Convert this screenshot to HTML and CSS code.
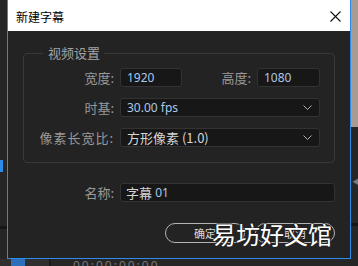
FILE: index.html
```html
<!DOCTYPE html>
<html lang="zh-CN">
<head>
  <meta charset="UTF-8">
  <meta name="viewport" content="width=device-width, initial-scale=1.0">
  <title>新建字幕</title>
  <link rel="stylesheet" href="styles.css">
</head>
<body>

  <div class="screen">
    <div class="side side-left">
      <div class="left-tab"></div>
      <div class="side-line"></div>
    </div>

    <div class="dialog">
      <div class="title-bar">
        <span class="title">新建字幕</span>
        <svg class="close" width="11" height="11" viewBox="0 0 11 11">
          <path d="M0.5 0.5 L10.5 10.5 M10.5 0.5 L0.5 10.5" stroke="#111" stroke-width="1.1" fill="none"/>
        </svg>
      </div>

      <div class="dialog-body">
        <fieldset class="group">
          <legend>视频设置</legend>
          <div class="form-grid">
            <label class="label">宽度:</label>
            <div class="field"><span class="value">1920</span></div>
            <label class="label">高度:</label>
            <div class="field"><span class="value">1080</span></div>

            <label class="label">时基:</label>
            <div class="field select span-3">
              <span class="value">30.00 fps</span>
              <svg class="chevron" width="9" height="5" viewBox="0 0 9 5"><path d="M0.5 0.5 L4.5 4.5 L8.5 0.5" stroke="#b0b0b0" fill="none"/></svg>
            </div>

            <label class="label wide">像素长宽比:</label>
            <div class="field select span-3">
              <span class="value plain">方形像素 (1.0)</span>
              <svg class="chevron" width="9" height="5" viewBox="0 0 9 5"><path d="M0.5 0.5 L4.5 4.5 L8.5 0.5" stroke="#b0b0b0" fill="none"/></svg>
            </div>
          </div>
        </fieldset>

        <div class="name-row">
          <label class="label">名称:</label>
          <div class="field"><span class="value plain">字幕</span>&nbsp;<span class="value">01</span></div>
        </div>

        <div class="buttons">
          <button class="button">确定</button>
          <button class="button">取消</button>
        </div>
      </div>
    </div>

    <div class="side side-right">
      <div class="right-image"></div>
      <div class="right-arrow">◀</div>
      <div class="side-line"></div>
    </div>

    <div class="bottom-strip">
      <div class="bottom-panel"><div class="bottom-tab"></div></div>
      <div class="timecode">00:00:00:00</div>
    </div>

    <div class="watermark">易坊好文馆</div>
  </div>

</body>
</html>
```

FILE: styles.css
```css
body {
  margin: 0;
  background-color: #262626;
  font-family: "Noto Sans", "Noto Sans CJK SC", sans-serif;
}
.screen {
  position: relative;
  display: grid;
  grid-template-columns: 7px 344px 7px;
  grid-template-rows: 259px 7px;
  width: 358px;
  height: 266px;
  overflow: hidden;
  background-color: #262626;
}
.side {
  display: flex;
  flex-direction: column;
  background-color: #262626;
}
.left-tab {
  width: 3px;
  height: 12px;
  margin-top: 160px;
  background-color: #2d8ceb;
}
.side-line {
  height: 3px;
  margin-top: auto;
  margin-bottom: 30px;
  background-color: #161616;
}
.side-right .side-line {
  margin-top: 36px;
}
.right-image {
  height: 127px;
  background-color: #a99b92;
}
.right-arrow {
  margin-top: 50px;
  font-size: 9px;
  line-height: 10px;
  color: #7a7a7a;
  padding-left: 1px;
}

/* dialog */
.dialog {
  display: flex;
  flex-direction: column;
  border: 1px solid #2d8ceb;
  background-color: #232323;
}
.title-bar {
  display: flex;
  align-items: center;
  justify-content: space-between;
  height: 30px;
  padding: 0 9px 0 8px;
  background-color: #fff;
  border-top: 1px solid #fff;
  margin-top: -1px;
}
.title {
  font-size: 12px;
  color: #000;
  font-family: "Noto Sans CJK SC", sans-serif;
}
.dialog-body {
  padding: 14px 15px 0 15px;
}
.group {
  margin: 0;
  padding: 7px 14px 15px 14px;
  border: 1px solid #393939;
  border-radius: 4px;
}
.group legend {
  margin-left: 5px;
  padding: 0 4px 0 5px;
  font-size: 13px;
  line-height: 16px;
  color: #a3a3a3;
  font-family: "Noto Sans CJK SC", sans-serif;
}
.form-grid {
  display: grid;
  grid-template-columns: 76px 62px 1fr 63px;
  grid-auto-rows: 19px;
  column-gap: 6px;
  row-gap: 11px;
  align-items: center;
}
.label {
  text-align: right;
  font-size: 13px;
  line-height: 19px;
  color: #999;
  font-family: "Noto Sans CJK SC", sans-serif;
  white-space: nowrap;
}
.label.wide {
  letter-spacing: 1px;
}
.field {
  display: flex;
  align-items: center;
  height: 19px;
  padding: 0 6px;
  background-color: #171717;
  border: 1px solid #333;
  border-radius: 3px;
  box-sizing: border-box;
  font-size: 12px;
}
.span-3 {
  grid-column: span 3;
}
.select {
  justify-content: space-between;
  padding-right: 7px;
}
.value {
  color: #a9c8ea;
}
.value.plain {
  color: #d6d6d6;
  font-family: "Noto Sans CJK SC", sans-serif;
  font-size: 13px;
}
.name-row {
  display: grid;
  grid-template-columns: 91px 1fr;
  column-gap: 6px;
  align-items: center;
  margin-top: 20px;
}
.name-row .field {
  padding-left: 5px;
}
.buttons {
  display: flex;
  justify-content: flex-end;
  gap: 10px;
  margin-top: 21px;
}
.button {
  width: 80px;
  height: 20px;
  padding: 0;
  border: 1px solid #b4b4b4;
  border-radius: 10px;
  background-color: #232323;
  color: #dadada;
  font-size: 11px;
  font-family: "Noto Sans CJK SC", sans-serif;
}

/* background bits */
.bottom-strip {
  grid-column: 1 / 4;
  display: flex;
  background-color: #262626;
}
.bottom-panel {
  width: 49px;
  background-color: #2f2f2f;
  border-right: 2px solid #1a1a1a;
}
.bottom-tab {
  width: 14px;
  height: 7px;
  margin-left: 11px;
  background-color: #2d6fb8;
}
.timecode {
  margin-left: 22px;
  font-size: 12px;
  line-height: 14px;
  color: #777;
  letter-spacing: 2px;
}

/* overlay watermark */
.watermark {
  position: absolute;
  left: 212px;
  top: 219px;
  font-size: 24px;
  line-height: 30px;
  color: #fff;
  font-family: "Noto Sans CJK SC", sans-serif;
  text-shadow: 1px 0 #222, -1px 0 #222, 0 1px #222, 0 -1px #222;
}
```
